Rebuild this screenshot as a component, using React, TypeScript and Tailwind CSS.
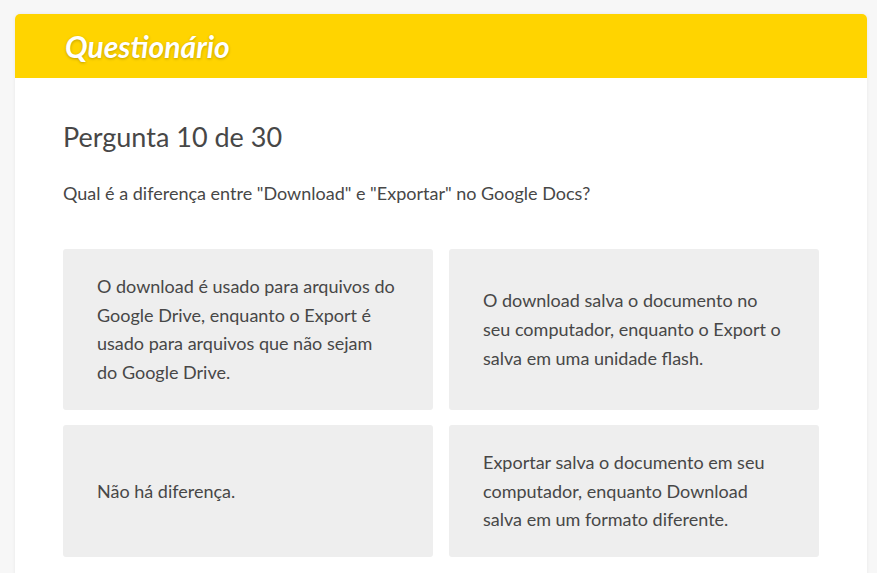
export default function App() {
  const opts = [
    ["O download é usado para arquivos do", "Google Drive, enquanto o Export é", "usado para arquivos que não sejam", "do Google Drive."],
    ["O download salva o documento no", "seu computador, enquanto o Export o", "salva em uma unidade flash."],
    ["Não há diferença."],
    ["Exportar salva o documento em seu", "computador, enquanto Download", "salva em um formato diferente."],
  ];
  return (
    <div className="min-h-[573px] bg-[#f7f7f7] pt-[14px]" style={{ fontFamily: "Lato, 'Noto Sans', sans-serif" }}>
      <div className="ml-[15px] w-[852px] rounded-[5px] bg-white shadow-[0_0_4px_rgba(0,0,0,0.06)] overflow-hidden">
        <div className="h-[64px] bg-[#ffd400] flex items-center pl-[50px]">
          <h1 className="text-[30px] leading-[36px] font-bold italic text-white [text-shadow:0_1px_3px_rgba(0,0,0,0.25)]">Questionário</h1>
        </div>
        <div className="px-12 pt-[41px] pb-10 text-[#474747]">
          <h2 className="text-[27px] leading-[36px]">Pergunta 10 de 30</h2>
          <p className="mt-[25px] text-[18px] leading-[26px]">Qual é a diferença entre "Download" e "Exportar" no Google Docs?</p>
          <div className="mt-[43px] grid grid-cols-2 gap-x-4 gap-y-[15px]">
            {opts.map((o, i) => (
              <div key={i} className="rounded-[3px] bg-[#eeeeee] px-[34px] py-[23px] flex items-center text-[18px] leading-[28.7px]">
                <div>
                  {o.map((l, j) => (
                    <div key={j} className="whitespace-nowrap">{l}</div>
                  ))}
                </div>
              </div>
            ))}
          </div>
        </div>
      </div>
    </div>
  );
}
